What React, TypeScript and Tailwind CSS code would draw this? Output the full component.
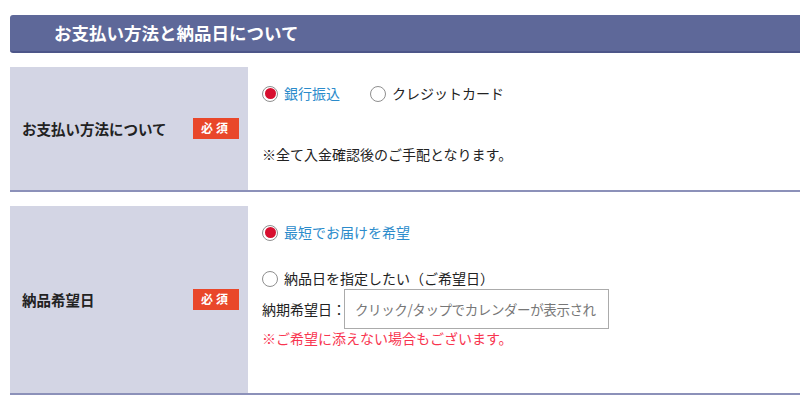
import React from 'react';

const jp = "font-['Meiryo','Noto_Sans_CJK_JP',sans-serif]";

const Radio: React.FC<{ checked?: boolean }> = ({ checked }) => (
  <span className="inline-flex h-[16px] w-[16px] shrink-0 items-center justify-center rounded-full border border-[#8f8f8f] bg-white">
    {checked && <span className="h-[11px] w-[11px] rounded-full bg-[#d70f2f]" />}
  </span>
);

const Badge: React.FC = () => (
  <span className="flex h-[21px] w-[46px] items-center justify-center bg-[#e9472a] font-['Liberation_Serif','Noto_Sans_CJK_JP',serif] text-[12px] font-bold tracking-[3px] text-white">
    必須
  </span>
);

const App: React.FC = () => {
  return (
    <div className={`h-[400px] w-[800px] overflow-hidden bg-white pl-[10px] pt-[15px] text-[14px] text-[#222] ${jp}`}>
      <div className="flex h-[38px] items-center rounded-l-[3px] border-b-2 border-[#4d5689] bg-[#5e6899] pl-[44px] text-[17.5px] font-bold text-white">
        お支払い方法と納品日について
      </div>

      {/* payment */}
      <div className="mt-[14px] flex h-[125px] border-b-2 border-[#8c91b9]">
        <div className="flex w-[238px] items-center justify-between bg-[#d3d5e4] pl-[12px] pr-[9px]">
          <span className="text-[14.5px] font-bold">お支払い方法について</span>
          <Badge />
        </div>
        <div className="flex flex-col pl-[14px] pt-[16px]">
          <div className="flex items-center">
            <label className="flex items-center gap-[6px] text-[#2b8bcb]">
              <Radio checked />
              銀行振込
            </label>
            <label className="ml-[30px] flex items-center gap-[6px]">
              <Radio />
              クレジットカード
            </label>
          </div>
          <p className="mt-[40px]">※全て入金確認後のご手配となります。</p>
        </div>
      </div>

      {/* delivery */}
      <div className="mt-[14px] flex h-[189px] border-b-2 border-[#8c91b9]">
        <div className="flex w-[238px] items-center justify-between bg-[#d3d5e4] pl-[12px] pr-[9px]">
          <span className="text-[14.5px] font-bold">納品希望日</span>
          <Badge />
        </div>
        <div className="flex flex-col pl-[14px] pt-[16px]">
          <label className="flex items-center gap-[6px] text-[#2b8bcb]">
            <Radio checked />
            最短でお届けを希望
          </label>
          <label className="mt-[25px] flex items-center gap-[6px]">
            <Radio />
            納品日を指定したい（ご希望日）
          </label>
          <div className="flex items-center">
            <span>納期希望日：</span>
            <div className="-ml-[2px] flex h-[40px] w-[265px] items-center whitespace-nowrap border border-[#ababab] pl-[10px] text-[13.5px] tracking-[-0.4px] text-[#777]">
              クリック/タップでカレンダーが表示され
            </div>
          </div>
          <p className="-mt-[1px] text-[#f8354f]">※ご希望に添えない場合もございます。</p>
        </div>
      </div>
    </div>
  );
};

export default App;
